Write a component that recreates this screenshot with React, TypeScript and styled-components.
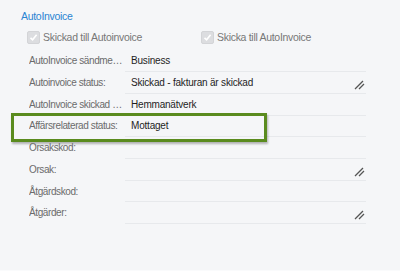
import React from "react";
import styled, { createGlobalStyle } from "styled-components";

const GlobalStyle = createGlobalStyle`
  html, body {
    margin: 0;
    padding: 0;
    background: #f5f6f8;
    font-family: "Liberation Sans", Arial, sans-serif;
  }
`;

const Panel = styled.div`
  width: 400px;
  height: 271px;
  box-sizing: border-box;
  padding: 9px 0 0 21px;
  border-bottom: 1px solid #fafbfc;
`;

const Title = styled.div`
  color: #2a84d2;
  font-size: 10.5px;
  letter-spacing: -0.3px;
  line-height: 14px;
`;

const CheckRow = styled.div`
  display: flex;
  margin: 7px 0 0 6px;
  height: 14px;
  align-items: center;
`;

const CheckItem = styled.label`
  display: flex;
  align-items: center;
  width: 174px;
  font-size: 10.5px;
  letter-spacing: -0.3px;
  color: #777;
  gap: 3px;
`;

const Box = styled.span`
  width: 11px;
  height: 11px;
  border-radius: 2px;
  background: #dcdde0;
  border: 1px solid #d3d4d7;
  display: flex;
  align-items: center;
  justify-content: center;
`;

const Fields = styled.div`
  margin: 6px 0 0 8px;
  display: flex;
  flex-direction: column;
`;

const Row = styled.div<{ $highlight?: boolean }>`
  position: relative;
  display: grid;
  grid-template-columns: 96px 241px;
  height: 21.75px;
  ${(p) =>
    p.$highlight &&
    `
    &::after {
      content: "";
      position: absolute;
      left: -18px;
      top: -2px;
      width: 250px;
      height: 23px;
      border: 3px solid #5a8b1e;
      box-shadow: 1px 2px 2px rgba(0, 0, 0, 0.28);
    }
  `}
`;

const Label = styled.div`
  font-size: 10px;
  letter-spacing: -0.4px;
  color: #6b6b6b;
  line-height: 21px;
  white-space: nowrap;
  overflow: hidden;
  text-overflow: ellipsis;
  padding-right: 1px;
`;

const Value = styled.div`
  position: relative;
  border-bottom: 1px solid #e7e9ec;
  font-size: 10px;
  letter-spacing: -0.2px;
  color: #1e1e1e;
  line-height: 21px;
  padding-left: 6px;
  box-sizing: border-box;
`;

const Grip = styled.svg`
  position: absolute;
  right: 0;
  bottom: 2px;
`;

const Check = () => (
  <Box>
    <svg width="9" height="9" viewBox="0 0 9 9">
      <path d="M1.5 4.8 L3.6 6.8 L7.6 1.8" stroke="#fff" strokeWidth="1.6" fill="none" />
    </svg>
  </Box>
);

const Resize = () => (
  <Grip width="12" height="12" viewBox="0 0 12 12">
    <path d="M1 10 L9 2 M5 10 L10 5" stroke="#555" strokeWidth="1.3" />
  </Grip>
);

const fields: { label: string; value?: string; multi?: boolean; hl?: boolean }[] = [
  { label: "AutoInvoice sändmetod:", value: "Business" },
  { label: "Autoinvoice status:", value: "Skickad - fakturan är skickad", multi: true },
  { label: "AutoInvoice skickad via:", value: "Hemmanätverk" },
  { label: "Affärsrelaterad status:", value: "Mottaget", hl: true },
  { label: "Orsakskod:" },
  { label: "Orsak:", multi: true },
  { label: "Åtgärdskod:" },
  { label: "Åtgärder:", multi: true },
];

export default function App() {
  return (
    <>
      <GlobalStyle />
      <Panel>
        <Title>AutoInvoice</Title>
        <CheckRow>
          <CheckItem>
            <Check />
            Skickad till Autoinvoice
          </CheckItem>
          <CheckItem>
            <Check />
            Skicka till AutoInvoice
          </CheckItem>
        </CheckRow>
        <Fields>
          {fields.map((f) => (
            <Row key={f.label} $highlight={f.hl}>
              <Label>{f.label}</Label>
              <Value>
                {f.value}
                {f.multi && <Resize />}
              </Value>
            </Row>
          ))}
        </Fields>
      </Panel>
    </>
  );
}
